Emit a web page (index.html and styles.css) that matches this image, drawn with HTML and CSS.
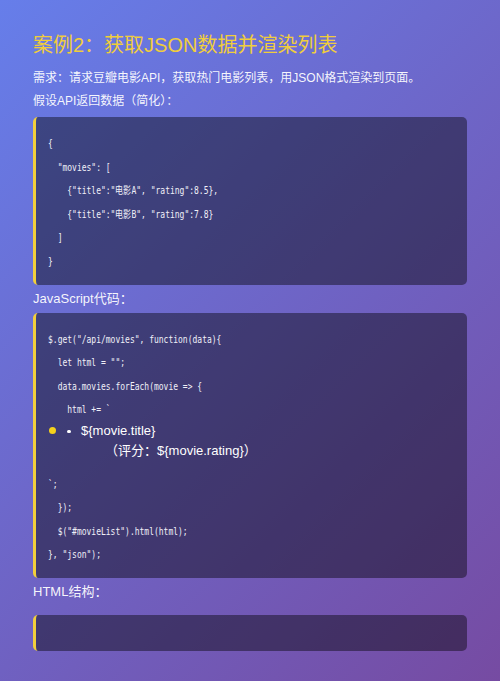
FILE: index.html
```html
<!DOCTYPE html>
<html lang="zh-CN">
<head>
<meta charset="utf-8">
<title>案例2：获取JSON数据并渲染列表</title>
<link rel="stylesheet" href="styles.css">
</head>
<body>
<main class="page">
  <h2 class="title">案例2：获取JSON数据并渲染列表</h2>
  <p class="para para-first">需求：请求豆瓣电影API，获取热门电影列表，用JSON格式渲染到页面。</p>
  <p class="para">假设API返回数据（简化）：</p>
  <div class="code code-first">
    <div class="line">{</div>
    <div class="line">  "movies": [</div>
    <div class="line">    {"title":"电影A", "rating":8.5},</div>
    <div class="line">    {"title":"电影B", "rating":7.8}</div>
    <div class="line">  ]</div>
    <div class="line">}</div>
  </div>
  <h3 class="sub">JavaScript代码：</h3>
  <div class="code">
    <div class="line">$.get("/api/movies", function(data){</div>
    <div class="line">  let html = "";</div>
    <div class="line">  data.movies.forEach(movie =&gt; {</div>
    <div class="line">    html += `</div>
    <div class="item">
      <div class="item-row">
        <span class="dot-wrap"><span class="dot"></span></span>
        <span class="bullet-wrap"><span class="bullet"></span></span>
        <span class="item-text">${movie.title}</span>
      </div>
      <div class="item-sub">（评分：${movie.rating}）</div>
    </div>
    <div class="line">`;</div>
    <div class="line">  });</div>
    <div class="line">  $("#movieList").html(html);</div>
    <div class="line">}, "json");</div>
  </div>
  <h3 class="sub sub-last">HTML结构：</h3>
  <div class="code code-empty"></div>
</main>
</body>
</html>
```
FILE: styles.css
```css
html, body {
  margin: 0;
  padding: 0;
}
body {
  width: 500px;
  min-height: 681px;
  background: linear-gradient(135deg, #667eea 0%, #764ba2 100%);
  font-family: "Liberation Sans", "Noto Sans CJK SC", sans-serif;
  color: rgba(255, 255, 255, 0.94);
}
.page {
  display: flex;
  flex-direction: column;
  padding: 31px 33px 0;
}
.title {
  margin: 0;
  font-size: 20px;
  line-height: 28px;
  font-weight: normal;
  color: #f0cd3c;
}
.para {
  margin: 0;
  font-size: 12px;
  line-height: 23px;
}
.para-first {
  margin-top: 7.5px;
}
.code {
  background: rgba(0, 0, 0, 0.42);
  border-left: 3px solid #f2cf3b;
  border-radius: 5px;
  padding: 15px 12px 11px;
  color: #f0f0f8;
}
.code-first {
  margin-top: 4.5px;
}
.line {
  font-family: "DejaVu Sans Mono", monospace;
  font-size: 10px;
  line-height: 23.6px;
  white-space: pre;
  transform: scaleX(0.8);
  transform-origin: left center;
}
.sub {
  margin: 0;
  font-size: 13px;
  line-height: 28px;
  font-weight: normal;
}
.sub-last {
  margin-bottom: 9px;
}
.code-empty {
  height: 36px;
  padding: 0;
  box-sizing: border-box;
}
.item {
  margin: -0.6px 0 11.2px;
  font-family: "Liberation Sans", "Noto Sans CJK SC", sans-serif;
  font-size: 13px;
  line-height: 20px;
  color: #ffffff;
}
.item-row {
  display: flex;
  align-items: center;
}
.dot-wrap {
  width: 17px;
  display: flex;
  align-items: center;
}
.dot {
  width: 7px;
  height: 7px;
  margin-left: 1px;
  margin-top: -2px;
  border-radius: 50%;
  background: #f5d21c;
}
.bullet-wrap {
  width: 16px;
  display: flex;
  align-items: center;
}
.bullet {
  width: 3.5px;
  height: 3.5px;
  margin-left: 2px;
  border-radius: 50%;
  background: #ffffff;
}
.item-sub {
  padding-left: 57px;
}
```
